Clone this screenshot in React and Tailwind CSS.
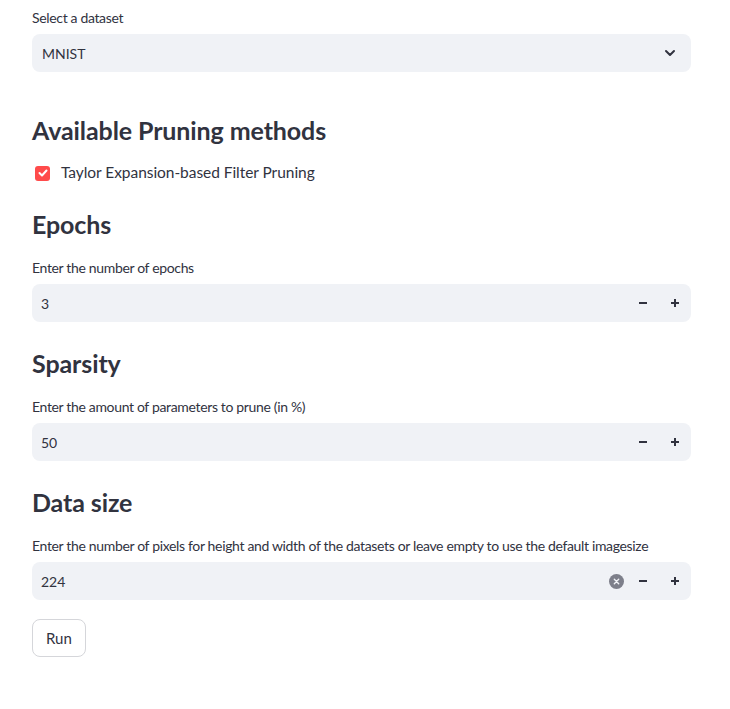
import { useState } from "react";

const font = { fontFamily: "Lato, 'Noto Sans', sans-serif" };

function Label({ children }) {
  return <p className="text-[14px] leading-[21px] tracking-[-0.34px] text-[#31333f] mb-[6px]">{children}</p>;
}

function Heading({ children, className = "" }) {
  return (
    <h2 className={`text-[25px] leading-[29px] font-bold text-[#31333f] tracking-[-0.1px] ${className}`}>
      {children}
    </h2>
  );
}

function NumberInput({ value, clearable }) {
  return (
    <div className="flex h-[38px] items-center rounded-lg bg-[#f0f2f6] pl-[9px]">
      <span className="flex-1 text-[14px] text-[#31333f]">{value}</span>
      {clearable && (
        <span className="mr-[3px] flex h-[15px] w-[15px] items-center justify-center rounded-full bg-[#7d7f8a]">
          <svg width="7" height="7" viewBox="0 0 8 8" stroke="#f0f2f6" strokeWidth="1.6" strokeLinecap="round">
            <path d="M1.5 1.5l5 5M6.5 1.5l-5 5" />
          </svg>
        </span>
      )}
      <button className="flex h-[32px] w-[32px] items-center justify-center">
        <svg width="10" height="10" viewBox="0 0 10 10" stroke="#31333f" strokeWidth="2">
          <path d="M1 5h8" />
        </svg>
      </button>
      <button className="flex h-[32px] w-[32px] items-center justify-center">
        <svg width="10" height="10" viewBox="0 0 10 10" stroke="#31333f" strokeWidth="2">
          <path d="M1 5h8M5 1v8" />
        </svg>
      </button>
    </div>
  );
}

export default function App() {
  const [checked] = useState(true);

  return (
    <div className="min-h-[709px] bg-white" style={font}>
      <div className="ml-[32px] w-[659px] pt-[7px]">
        <Label>Select a dataset</Label>
        <div className="flex h-[38px] items-center justify-between rounded-lg bg-[#f0f2f6] pl-[10px] pr-[15px]">
          <span className="text-[14px] text-[#31333f]">MNIST</span>
          <svg width="12" height="8" viewBox="0 0 12 8" fill="none" stroke="#31333f" strokeWidth="2" strokeLinecap="round" strokeLinejoin="round">
            <path d="M2 2l4 4 4-4" />
          </svg>
        </div>

        <Heading className="mt-[44px]">Available Pruning methods</Heading>
        <label className="mt-[16px] flex h-[24px] items-center gap-[11px]">
          <span className="ml-[3px] flex h-[15px] w-[15px] items-center justify-center rounded-[3px] bg-[#ff4b4b]">
            {checked && (
              <svg width="10" height="8" viewBox="0 0 10 8" fill="none" stroke="white" strokeWidth="2" strokeLinecap="round" strokeLinejoin="round">
                <path d="M1.5 4l2.5 2.5L8.5 1.5" />
              </svg>
            )}
          </span>
          <span className="text-[15.5px] tracking-[-0.05px] text-[#31333f]">Taylor Expansion-based Filter Pruning</span>
        </label>

        <Heading className="mt-[25px]">Epochs</Heading>
        <div className="mt-[18px]">
          <Label>Enter the number of epochs</Label>
          <NumberInput value="3" />
        </div>

        <Heading className="mt-[27px]">Sparsity</Heading>
        <div className="mt-[18px]">
          <Label>Enter the amount of parameters to prune (in %)</Label>
          <NumberInput value="50" />
        </div>

        <Heading className="mt-[27px]">Data size</Heading>
        <div className="mt-[18px]">
          <Label>
            Enter the number of pixels for height and width of the datasets or leave empty to use the default imagesize
          </Label>
          <NumberInput value="224" clearable />
        </div>

        <button className="mt-[19px] h-[38px] rounded-lg border border-[#d5d6da] bg-white px-[13px] text-[15px] text-[#31333f]">
          Run
        </button>
      </div>
    </div>
  );
}
